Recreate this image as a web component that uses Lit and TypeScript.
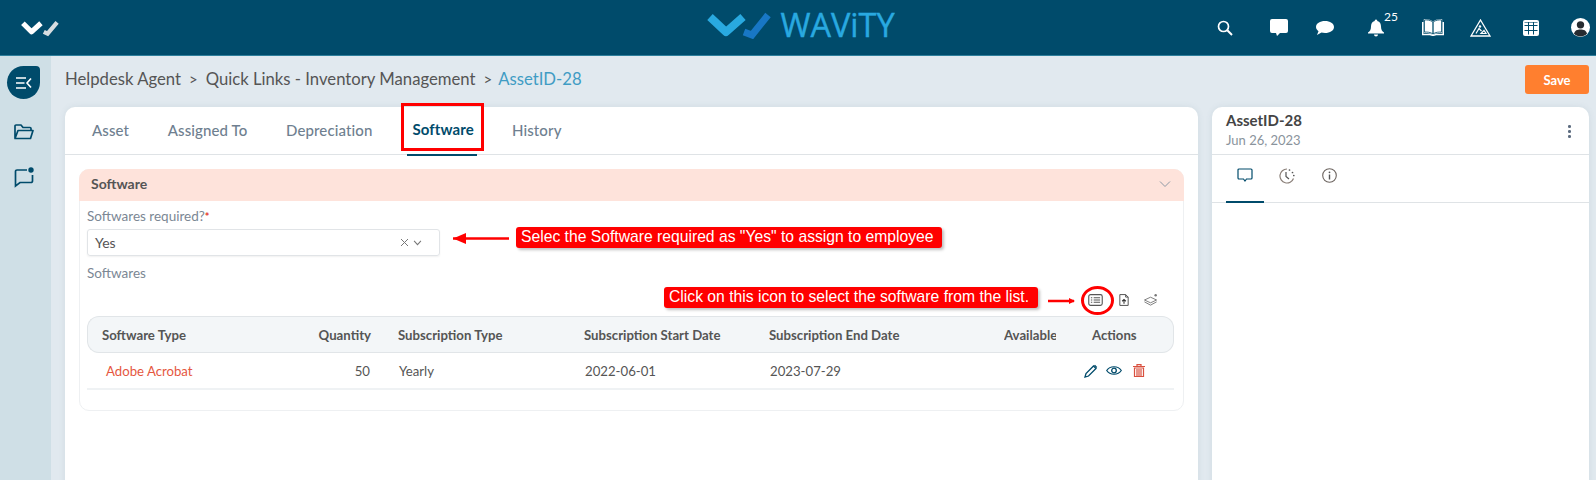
import { LitElement, html, css, svg } from "lit";
import { customElement } from "lit/decorators.js";

const check = (a: string, b: string) => svg`<path d="M2 5 L11 14 L21 5" fill="none" stroke="${a}" stroke-width="5.4" stroke-linejoin="round"/><path d="M24 14 L28 16 L38 4" fill="none" stroke="${b}" stroke-width="4.4"/>`;

@customElement("app-root")
export class AppRoot extends LitElement {
  static styles = css`
    :host { display: block; width: 1596px; height: 480px; overflow: hidden; position: relative; font-family: Lato, "Liberation Sans", sans-serif; background: #e1e9ef; color: #4a4a4a; }
    * { box-sizing: border-box; }
    svg { display: block; flex: none; }
    .top { height: 56px; background: #004b6b; border-bottom: 1px solid #2e7f9c; display: grid; grid-template-columns: 1fr auto 1fr; align-items: center; padding: 0 21px; }
    .logo-small { display: flex; }
    .brand { display: flex; align-items: center; gap: 7px; margin-top: -5px; margin-left: 6px; }
    .brand span { font-family: "Open Sans", "Liberation Sans", sans-serif; font-size: 32.5px; color: #29a9e0; line-height: 32px; -webkit-text-stroke: 0.4px #29a9e0; }
    .icons { display: flex; justify-content: flex-end; align-items: center; color: #fff; }
    .ic { width: 50px; display: flex; justify-content: center; position: relative; }
    .ic sup { position: absolute; left: 33px; top: -8px; font-size: 12px; font-weight: 400; color: #fff; line-height: 12px; }
    .i-chat { margin-left: 4px; }
    .i-bubble { margin-left: -4px; }
    .i-bell { margin-left: 1px; }
    .i-book { margin-left: 7px; }
    .i-warn { margin-left: -3px; }
    .i-grid { margin-left: 1px; }
    .i-user { margin-left: 8px; margin-right: -21px; width: 32px; }
    .body { display: flex; height: 424px; }
    .side { width: 51px; background: #cfdfe6; display: flex; flex-direction: column; align-items: center; padding-top: 10px; flex: none; }
    .side-btn { width: 33px; height: 33px; background: #004b6b; border-radius: 50% 4px 50% 50%; display: flex; align-items: center; justify-content: center; margin-left: -4px; }
    .side svg.f { margin-top: 25px; margin-left: -3px; }
    .side svg.m { margin-top: 27px; margin-left: -2px; }
    .main { flex: 1; padding: 9px 7px 0 14px; min-width: 0; }
    .crumbs { display: flex; align-items: flex-start; height: 30px; font-size: 16.7px; line-height: 28px; color: #555; }
    .crumbs .s { margin: 0 8px; font-size: 15px; }
    .crumbs .s2 { margin: 0 6px 0 8px; }
    .crumbs .cur { color: #3f9cc4; }
    .crumbs .save { margin-left: auto; width: 64px; height: 29px; border: 0; border-radius: 3px; background: #ff7f2f; color: #fff; font: 700 13px Lato, sans-serif; }
    .columns { display: flex; gap: 14px; margin-top: 12px; }
    .card { background: #fff; border-radius: 10px 10px 0 0; height: 380px; box-shadow: 0 0 6px rgba(90,120,140,.12); }
    .left { width: 1133px; }
    .right { width: 377px; }
    .tabs { height: 48px; border-bottom: 1px solid #dfe3e6; display: flex; padding-left: 27px; font-size: 15px; font-weight: 500; color: #6f7f90; }
    .tab { margin-right: 38.5px; padding-top: 14px; position: relative; height: 48px; letter-spacing: .12px; }
    .tab.on { color: #004b6b; font-weight: 700; padding-top: 13px; margin-left: 1.5px; margin-right: 38px; }
    .tab.on::after { content: ""; position: absolute; left: -5px; right: -3px; bottom: -1px; height: 2px; background: #004b6b; }
    .section { margin: 14px 14px 0 14px; height: 242px; border: 1px solid #eef0f2; border-radius: 10px; }
    .sec-head { height: 32px; margin: -1px -1px 0; background: #fee3db; border-radius: 10px 10px 0 0; display: flex; align-items: center; justify-content: space-between; padding: 0 13px 3px 12px; font-size: 14px; font-weight: 700; color: #555; }
    .sec-body { padding: 6px 7px 0 7px; }
    .lbl { font-size: 13.5px; color: #7b8794; line-height: 18px; }
    .lbl b { color: #e53b2e; font-size: 11px; }
    .select { width: 353px; height: 27px; margin-top: 3px; border: 1px solid #e1e4e7; border-radius: 3px; display: flex; align-items: center; padding: 0 17px 0 7px; font-size: 14px; color: #555; box-shadow: 0 1px 2px rgba(0,0,0,.06); }
    .select .ctl { margin-left: auto; display: flex; align-items: center; gap: 4px; }
    .lbl.sw { margin-top: 8px; }
    .tools { height: 34px; display: flex; justify-content: flex-end; align-items: center; gap: 15.5px; padding: 2px 18px 0 0; }
    table { width: 1087px; border-collapse: separate; border-spacing: 0; table-layout: fixed; font-size: 13.2px; }
    th { height: 37px; background: #f3f6f8; border-top: 1px solid #e1e5e8; border-bottom: 1px solid #e1e5e8; font-weight: 700; text-align: left; padding: 0; color: #555; white-space: nowrap; overflow: hidden; }
    th:first-child { border-left: 1px solid #e1e5e8; border-radius: 12px 0 0 12px; padding-left: 14px; }
    th:last-child { border-right: 1px solid #e1e5e8; border-radius: 0 12px 12px 0; padding-left: 36px; }
    th.q { text-align: right; padding-right: 27px; }
    td { height: 37px; border-bottom: 2px solid #eff2f4; color: #555; padding: 0 0 0 1px; }
    td:first-child { padding-left: 19px; color: #e5573f; }
    td.num { text-align: right; padding-right: 28px; }
    .acts { display: flex; gap: 8px; align-items: center; padding-left: 27px; }
    .trash { margin-left: 3px; }
    .r-head { height: 48px; border-bottom: 1px solid #dfe3e6; display: flex; justify-content: space-between; padding: 4px 18px 0 14px; }
    .r-title { font-size: 15px; font-weight: 700; color: #444; line-height: 19px; }
    .r-date { font-size: 13px; color: #8a939c; line-height: 20px; }
    .dots { display: flex; flex-direction: column; gap: 2.5px; margin-top: 14px; }
    .dots i { width: 2.6px; height: 2.6px; border-radius: 50%; background: #5d6c80; }
    .r-tabs { height: 48px; border-bottom: 1px solid #dfe3e6; display: flex; padding-left: 14px; gap: 4px; }
    .r-tab { width: 38px; height: 48px; display: flex; justify-content: center; padding-top: 13px; position: relative; }
    .r-tab.on::after { content: ""; position: absolute; left: 0; right: 0; bottom: 0; height: 2px; background: #004b6b; }
    .note { position: absolute; background: #f00; color: #fff; font: 15.7px "Liberation Sans", Arial, sans-serif; height: 21px; line-height: 20px; border-radius: 3px; padding-left: 5px; box-shadow: 2px 2px 3px rgba(0,0,0,.25); white-space: nowrap; }
    .n1 { left: 516px; top: 227px; width: 426px; }
    .n2 { left: 664px; top: 287px; width: 374px; }
    .box { position: absolute; left: 401px; top: 103px; width: 83px; height: 48px; border: 3px solid #f00; }
    .over { position: absolute; left: 0; top: 0; pointer-events: none; }
    .circle { position: absolute; left: 1081px; top: 286px; width: 33px; height: 29px; border: 3px solid #f00; border-radius: 50%; }
  `;

  render() {
    const heads = ["Software Type", "Quantity", "Subscription Type", "Subscription Start Date", "Subscription End Date", "Available", "Actions"];
    return html`
      <div class="top">
        <div class="logo-small"><svg width="38" height="20" viewBox="0 0 40 20">${check("#fff", "#d7dde0")}</svg></div>
        <div class="brand">
          <svg width="66" height="28" viewBox="0 0 66 28"><path d="M3 6 L19 21 L36 6" fill="none" stroke="#29a9e0" stroke-width="8" stroke-linejoin="round"/><path d="M37 21 L45 24 L61 4" fill="none" stroke="#1877c5" stroke-width="7"/></svg>
          <span>WAViTY</span>
        </div>
        <div class="icons">
          <div class="ic"><svg width="16" height="16" viewBox="0 0 16 16"><circle cx="6.5" cy="6.5" r="5" fill="none" stroke="#fff" stroke-width="1.7"/><path d="M10.3 10.3 L15 15" stroke="#fff" stroke-width="2"/></svg></div>
          <div class="ic i-chat"><svg width="18" height="19" viewBox="0 0 18 19"><path d="M2 1 H16 a2 2 0 0 1 2 2 V13 a2 2 0 0 1-2 2 H10 L7 18 L6 15 H2 a2 2 0 0 1-2-2 V3 a2 2 0 0 1 2-2z" fill="#fff"/></svg></div>
          <div class="ic i-bubble"><svg width="18" height="16" viewBox="0 0 18 16"><path d="M9 1 C14 1 18 3.500 18 7 C18 10.500 14 13 9 13 C7.500 13 6.500 12.800 5.500 12.500 L1 15 L2.500 11.200 C1 10 0 8.600 0 7 C0 3.500 4 1 9 1z" fill="#fff"/></svg></div>
          <div class="ic i-bell"><svg width="16" height="18" viewBox="0 0 16 18"><path d="M8 0.500 a1.300 1.300 0 0 1 1.300 1.500 C12 2.800 13 5 13 7.500 C13 10.500 14 12.200 16 13.500 V14.500 H0 V13.500 C2 12.200 3 10.500 3 7.500 C3 5 4 2.800 6.700 2 A1.300 1.300 0 0 1 8 0.500z M6 15.500 H10 A2 2 0 0 1 6 15.500z" fill="#fff"/></svg><sup>25</sup></div>
          <div class="ic i-book"><svg width="22" height="17" viewBox="0 0 22 17"><path d="M11 3 C8 1 5 .8 2.500 1 V13 C5 13 8.500 13 11 15 C13.500 13 17 13 19.500 13 V1 C17 .8 14 1 11 3z M11 3 V15 M.7 3 V15.500 H8 L11 16.500 L14 15.500 H21.300 V3" fill="none" stroke="#fff" stroke-width="1.400"/><path d="M2.500 1 C5 .8 8 1 11 3 V15 C8.500 13 5 13 2.500 13z M19.500 1 C17 .8 14 1 11 3 V15 C13.500 13 17 13 19.500 13z" fill="#fff" stroke="#004b6b" stroke-width=".8"/></svg></div>
          <div class="ic i-warn"><svg width="21" height="18" viewBox="0 0 21 18"><path d="M10.500 1 L20 17 H1z" fill="none" stroke="#fff" stroke-width="1.300"/><circle cx="10" cy="7.500" r="1.200" fill="#fff"/><path d="M6 14.500 L9 9.500 L11.500 12 M11 14.500 L14 11.500 L16 14.500z" fill="none" stroke="#fff" stroke-width="1.200"/></svg></div>
          <div class="ic i-grid"><svg width="16" height="16" viewBox="0 0 16 16"><rect width="16" height="16" rx="2" fill="#fff"/><path d="M1.500 5.500 H14.500 M1.500 10.500 H14.500 M5.500 2 V14.500 M10.500 2 V14.500" stroke="#004b6b" stroke-width="1"/><path d="M1.500 2.500 H14.500" stroke="#004b6b" stroke-width=".6"/></svg></div>
          <div class="ic i-user"><svg width="19" height="19" viewBox="0 0 18 18"><circle cx="9" cy="9" r="9" fill="#fff"/><circle cx="9" cy="6.500" r="3.500" fill="#262b30"/><path d="M2.800 15 C3.500 11.500 6 10.800 9 10.800 C12 10.800 14.500 11.500 15.200 15 C13.500 17 11 17.500 9 17.500 C7 17.500 4.500 17 2.800 15z" fill="#262b30"/></svg></div>
        </div>
      </div>
      <div class="body">
        <div class="side">
          <div class="side-btn"><svg width="18" height="14" viewBox="0 0 18 14"><path d="M1 2 H11 M1 7 H9.500 M1 12 H11 M16 2.500 L12 7 L16 11.500" fill="none" stroke="#fff" stroke-width="1.600"/></svg></div>
          <svg class="f" width="20" height="16" viewBox="0 0 20 16"><path d="M1 14 V2 a1 1 0 0 1 1-1 H7 L9 3.500 H16 a1 1 0 0 1 1 1 V6 M1 14.500 L4 6.500 H19 L16.500 14.500z" fill="none" stroke="#004b6b" stroke-width="1.700" stroke-linejoin="round"/></svg>
          <svg class="m" width="21" height="21" viewBox="0 0 21 21"><path d="M13 3 H3 a1.500 1.500 0 0 0-1.500 1.500 V19 L6 15.500 H17 a1.500 1.500 0 0 0 1.500-1.500 V8" fill="none" stroke="#004b6b" stroke-width="1.700"/><circle cx="17" cy="3" r="2.700" fill="#004b6b"/></svg>
        </div>
        <div class="main">
          <div class="crumbs"><span>Helpdesk Agent</span><span class="s">&gt;</span><span>Quick Links - Inventory Management</span><span class="s s2">&gt;</span><span class="cur">AssetID-28</span><button class="save">Save</button></div>
          <div class="columns">
            <div class="card left">
              <div class="tabs"><div class="tab">Asset</div><div class="tab">Assigned To</div><div class="tab">Depreciation</div><div class="tab on">Software</div><div class="tab">History</div></div>
              <div class="section">
                <div class="sec-head"><span>Software</span><svg width="12" height="8" viewBox="0 0 12 8"><path d="M1 1.500 L6 6.500 L11 1.500" fill="none" stroke="#8d99a5" stroke-width="1"/></svg></div>
                <div class="sec-body">
                  <div class="lbl">Softwares required?<b>*</b></div>
                  <div class="select"><span>Yes</span><span class="ctl"><svg width="9" height="9" viewBox="0 0 9 9"><path d="M1 1 L8 8 M8 1 L1 8" stroke="#777" stroke-width="1"/></svg><svg width="9" height="6" viewBox="0 0 10 7"><path d="M1 1 L5 5.500 L9 1" fill="none" stroke="#777" stroke-width="1.200"/></svg></span></div>
                  <div class="lbl sw">Softwares</div>
                  <div class="tools">
                    <svg width="15" height="12" viewBox="0 0 16 13"><rect x=".7" y=".7" width="14.600" height="11.600" rx="2" fill="none" stroke="#555" stroke-width="1.200"/><path d="M3 4 H4.500 M6 4 H13 M3 6.500 H4.500 M6 6.500 H13 M3 9 H4.500 M6 9 H13" stroke="#555" stroke-width="1.200"/></svg>
                    <svg width="10" height="14" viewBox="0 0 12 15"><path d="M1 1 H8 L11 4 V14 H1z M8 1 V4 H11" fill="none" stroke="#555" stroke-width="1.200"/><path d="M6 12 V7 M3.800 9 L6 6.800 L8.200 9" fill="none" stroke="#333" stroke-width="1.300"/></svg>
                    <svg width="14" height="14" viewBox="0 0 15 14"><path d="M7 4 L13.500 7 L7 10 L.5 7z M.5 9 L7 12.500 L13.500 9" fill="none" stroke="#777" stroke-width="1"/><circle cx="12.500" cy="2" r="1.300" fill="#777"/></svg>
                  </div>
                  <table>
                    <colgroup><col style="width:200px"/><col style="width:111px"/><col style="width:186px"/><col style="width:185px"/><col style="width:235px"/><col style="width:52px"/><col style="width:118px"/></colgroup>
                    <thead><tr>${heads.map((h, i) => html`<th class=${i === 1 ? "q" : ""}>${h}</th>`)}</tr></thead>
                    <tbody><tr>
                      <td>Adobe Acrobat</td><td class="num">50</td><td>Yearly</td><td>2022-06-01</td><td>2023-07-29</td><td></td>
                      <td><div class="acts">
                        <svg width="14" height="14" viewBox="0 0 14 14"><path d="M1 13 L2 9.500 L9.500 2 L12 4.500 L4.500 12z" fill="none" stroke="#004b6b" stroke-width="1.300"/><path d="M10 1.500 L11 .8 L13.200 3 L12.500 4z" fill="#004b6b"/></svg>
                        <svg width="16" height="11" viewBox="0 0 16 11"><path d="M.7 5.500 C4 .5 12 .5 15.300 5.500 C12 10.500 4 10.500 .7 5.500z" fill="none" stroke="#004b6b" stroke-width="1.200"/><circle cx="8" cy="5.500" r="2.300" fill="none" stroke="#004b6b" stroke-width="1.300"/></svg>
                        <svg class="trash" width="12" height="13" viewBox="0 0 12 13"><path d="M0 2.500 H12 M4 2 V.7 H8 V2 M1.500 4 H10.500 V12.500 H1.500z" fill="none" stroke="#d9503f" stroke-width="1.200"/><path d="M4 5 V12 M6 5 V12 M8 5 V12" stroke="#d9503f" stroke-width="1.200"/></svg>
                      </div></td>
                    </tr></tbody>
                  </table>
                </div>
              </div>
            </div>
            <div class="card right">
              <div class="r-head"><div><div class="r-title">AssetID-28</div><div class="r-date">Jun 26, 2023</div></div><div class="dots"><i></i><i></i><i></i></div></div>
              <div class="r-tabs">
                <div class="r-tab on"><svg width="16" height="15" viewBox="0 0 16 15"><path d="M2 1 H14 a1 1 0 0 1 1 1 V10 a1 1 0 0 1-1 1 H9.500 L8 13 L6.500 11 H2 a1 1 0 0 1-1-1 V2 a1 1 0 0 1 1-1z" fill="none" stroke="#004b6b" stroke-width="1.200"/></svg></div>
                <div class="r-tab"><svg width="16" height="16" viewBox="0 0 16 16"><path d="M8 1 A7 7 0 1 0 14.500 10.500" fill="none" stroke="#8a7f78" stroke-width="1.200"/><path d="M7 4 V8.500 L10 11" fill="none" stroke="#555" stroke-width="1.200"/><path d="M10.500 2 h.01 M13.500 4.500 h.01 M14.800 7.500 h.01" stroke="#555" stroke-width="1.700" stroke-linecap="round"/></svg></div>
                <div class="r-tab"><svg width="15" height="15" viewBox="0 0 15 15"><circle cx="7.500" cy="7.500" r="6.800" fill="none" stroke="#6d6560" stroke-width="1.100"/><path d="M7.500 6.500 V11.500" stroke="#555" stroke-width="1.400"/><circle cx="7.500" cy="4.300" r=".9" fill="#555"/></svg></div>
              </div>
            </div>
          </div>
        </div>
      </div>
      <div class="box"></div>
      <div class="note n1">Selec the Software required as "Yes" to assign to employee</div>
      <div class="note n2">Click on this icon to select the software from the list.</div>
      <div class="circle"></div>
      <svg class="over" width="1596" height="480" viewBox="0 0 1596 480">
        <path d="M453 238.500 L509 238.500" stroke="#f00" stroke-width="2.500"/><path d="M453 238.500 L466 233 V244z" fill="#f00"/>
        <path d="M1048 301 H1074" stroke="#f00" stroke-width="2.500"/><path d="M1075 301 L1069 298 V304z" fill="#f00"/>
      </svg>
    `;
  }
}
